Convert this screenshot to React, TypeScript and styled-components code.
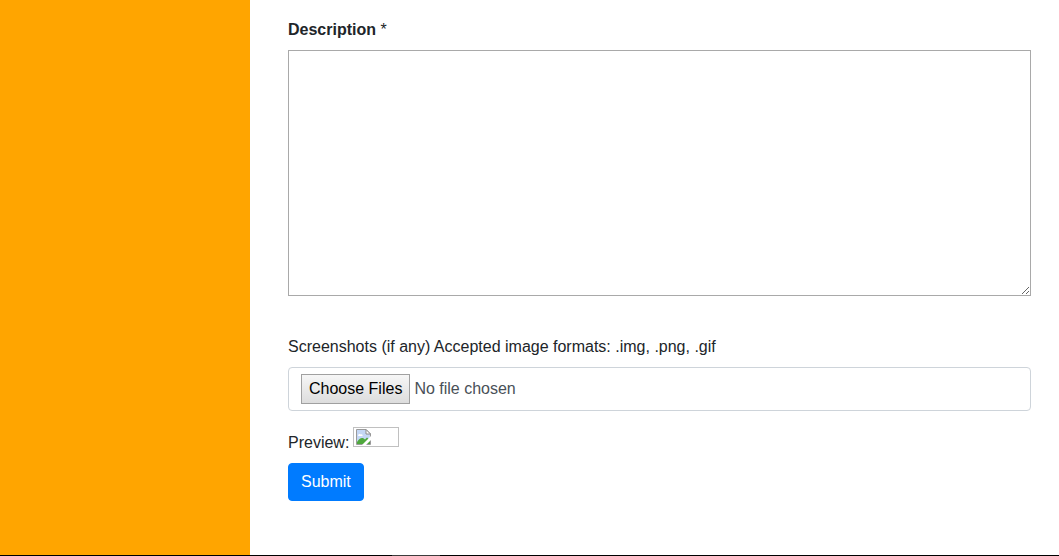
import React from "react";
import styled, { createGlobalStyle } from "styled-components";

const GlobalStyle = createGlobalStyle`
  *, *::before, *::after { box-sizing: border-box; }
  body {
    margin: 0;
    background: #fff;
    color: #212529;
    font: 16px/24px "Liberation Sans", Arial, sans-serif;
  }
`;

const Page = styled.div`
  display: flex;
  flex-direction: column;
  min-height: 100vh;
`;

const Body = styled.div`
  display: flex;
  flex: 1;
`;

const Sidebar = styled.aside`
  flex: 0 0 250px;
  background: orange;
`;

const Form = styled.form`
  flex: 1;
  min-width: 0;
  padding: 18px 28px 24px 38px;
`;

const Field = styled.div<{ $gap: number }>`
  display: flex;
  flex-direction: column;
  gap: 8px;
  margin-bottom: ${(p) => p.$gap}px;
`;

const TextArea = styled.textarea`
  display: block;
  width: 100%;
  height: 246px;
  margin: 0;
  padding: 2px;
  border: 1px solid #a9a9a9;
  border-radius: 0;
  background: #fff;
  color: inherit;
  font: inherit;
  resize: vertical;
`;

const FileInput = styled.input`
  display: block;
  width: 100%;
  height: 44px;
  padding: 6px 12px;
  border: 1px solid #ced4da;
  border-radius: 4px;
  background: #fff;
  color: #495057;
  font: inherit;

  &::file-selector-button {
    height: 30px;
    margin: 0 4px 0 0;
    padding: 1px 7px;
    border: 1px solid #a0a0a0;
    border-radius: 0;
    background: linear-gradient(#f6f6f6, #dddddd);
    color: #000;
    font: inherit;
  }
`;

const Preview = styled.div`
  display: flex;
  align-items: flex-start;
  gap: 4px;
  margin-bottom: 8px;
`;

const PreviewLabel = styled.span`
  padding-top: 4px;
`;

const MissingImage = styled.div`
  width: 46px;
  height: 20px;
  padding: 1px;
  border: 1px solid #c0c0c0;

  svg { display: block; }
`;

const SubmitButton = styled.button`
  display: block;
  padding: 6px 12px;
  border: 1px solid #007bff;
  border-radius: 4px;
  background: #007bff;
  color: #fff;
  font: inherit;
  cursor: pointer;
`;

const BottomEdge = styled.footer`
  display: flex;
  height: 1px;
  background: #000;
`;

const EdgeMark = styled.span`
  width: 48px;
  margin-left: 37%;
  background: #3c3c3c;
`;

function BrokenImageIcon() {
  return (
    <svg width="16" height="16" viewBox="0 0 16 16" aria-hidden="true">
      <path d="M1.5 .5H11L15.500 5V15.500H1.500Z" fill="#c4d7f5" stroke="#9a9a9a" />
      <path d="M3 6.500C3 5 5 4.500 5.500 5.500C7 5 8 6 7.500 7H3.500Z" fill="#fff" />
      <path d="M2 13C4 9.500 6 8.500 8 9L10 10.500L12 8.500L15 11V15H2Z" fill="#4fa83d" />
      <path d="M11 .5V5H15.500Z" fill="#fff" stroke="#8c8c8c" />
      <path d="M16 7L7 16H11L16 11Z" fill="#fff" />
    </svg>
  );
}

export default function App() {
  return (
    <>
      <GlobalStyle />
      <Page>
        <Body>
          <Sidebar />
          <Form onSubmit={(e) => e.preventDefault()}>
            <Field $gap={39}>
              <label htmlFor="description">
                <strong>Description</strong> *
              </label>
              <TextArea id="description" name="description" />
            </Field>
            <Field $gap={16}>
              <label htmlFor="screenshots">
                Screenshots (if any) Accepted image formats: .img, .png, .gif
              </label>
              <FileInput id="screenshots" name="screenshots" type="file" accept="image/*" multiple />
            </Field>
            <Preview>
              <PreviewLabel>Preview:</PreviewLabel>
              <MissingImage>
                <BrokenImageIcon />
              </MissingImage>
            </Preview>
            <SubmitButton type="submit">Submit</SubmitButton>
          </Form>
        </Body>
        <BottomEdge>
          <EdgeMark />
        </BottomEdge>
      </Page>
    </>
  );
}
